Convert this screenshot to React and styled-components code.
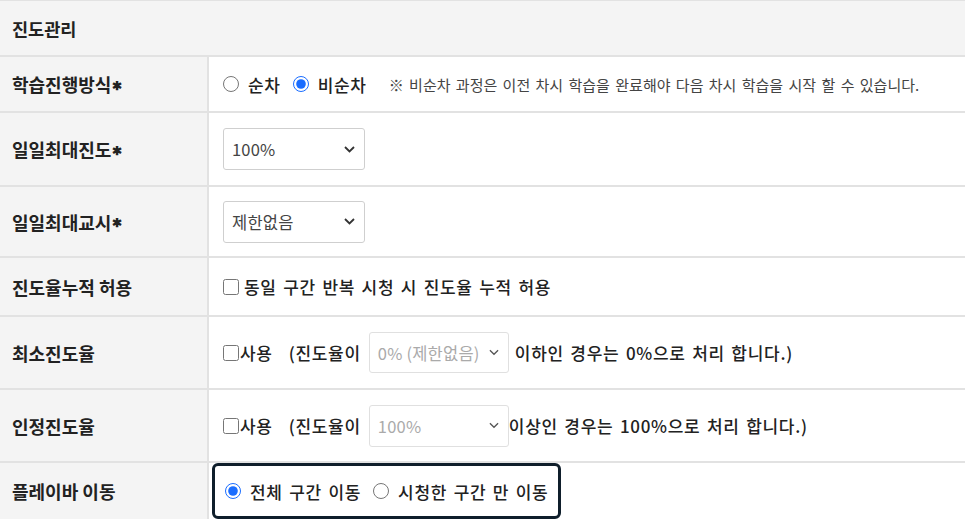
import React from 'react';
import styled, { createGlobalStyle } from 'styled-components';

const GlobalStyle = createGlobalStyle`
  body {
    margin: 0;
    background: #fff;
    font-family: "Noto Sans CJK KR", "Noto Sans", sans-serif;
    color: #222;
  }
`;

const Table = styled.div`
  width: 965px;
  border-top: 1px solid #e2e2e2;
`;

const Header = styled.div`
  height: 54px;
  display: flex;
  align-items: center;
  padding-left: 12px;
  background: #f4f4f4;
  border-bottom: 2px solid #e2e2e2;
  font-size: 17.5px;
  font-weight: 700;
`;

const Row = styled.div`
  display: grid;
  grid-template-columns: 209px 1fr;
  height: ${({ h }) => h}px;
  border-bottom: ${({ last }) => (last ? 'none' : '2px solid #e2e2e2')};
  box-sizing: border-box;
`;

const Label = styled.div`
  display: flex;
  align-items: center;
  padding-left: 12px;
  background: #f4f4f4;
  border-right: 2px solid #e2e2e2;
  font-size: 18px;
  font-weight: 700;
  color: #222;
`;

const Star = styled.span`
  font-size: 12px;
  margin-left: 1px;
`;

const Cell = styled.div`
  display: flex;
  align-items: center;
  padding-left: ${({ pl }) => pl ?? 14}px;
  font-size: 17px;
  font-weight: 500;
  color: #222;
  letter-spacing: 0.7px;
  word-spacing: 2px;
`;

const Radio = styled.input.attrs({ type: 'radio' })`
  width: 16px;
  height: 16px;
  margin: 0 9px 0 0;
  accent-color: #1a6dff;
`;

const Check = styled.input.attrs({ type: 'checkbox' })`
  width: 16px;
  height: 16px;
  margin: 0 ${({ gap }) => gap ?? 1}px 0 0;
`;

const Choice = styled.label`
  display: flex;
  align-items: center;
  margin-right: ${({ mr }) => mr ?? 12}px;
`;

const Note = styled.span`
  font-size: 15px;
  font-weight: 400;
  color: #444;
  margin-left: 22px;
  letter-spacing: 0;
  word-spacing: 2px;
`;

const Select = styled.div`
  display: flex;
  align-items: center;
  justify-content: space-between;
  box-sizing: border-box;
  width: ${({ w }) => w}px;
  height: ${({ h }) => h}px;
  padding: 0 9px 0 8px;
  border: 1px solid ${({ disabled }) => (disabled ? '#e0e0e0' : '#cfcfcf')};
  border-radius: 3px;
  background: #fff;
  font-size: 16.5px;
  font-weight: 400;
  letter-spacing: 0.2px;
  word-spacing: 0;
  color: ${({ disabled }) => (disabled ? '#aaa' : '#444')};
  margin: ${({ m }) => m ?? '0'};
`;

const Text = styled.span`
  margin-left: ${({ ml }) => ml ?? 0}px;
  white-space: pre;
`;

const Focus = styled.div`
  display: flex;
  align-items: center;
  height: 100%;
  box-sizing: border-box;
  padding: 0 10px 0 10px;
  border: 3px solid #0f1e2b;
  border-radius: 6px;
`;

const Chevron = ({ light }) => (
  <svg width={light ? 10 : 11} height="7" viewBox="0 0 11 7" fill="none">
    <path d="M1 1l4.5 4.5L10 1" stroke={light ? '#555' : '#333'} strokeWidth={light ? 1.4 : 1.8} />
  </svg>
);

const App = () => (
  <>
    <GlobalStyle />
    <Table>
      <Header>진도관리</Header>
      <Row h={56}>
        <Label>학습진행방식<Star>✱</Star></Label>
        <Cell>
          <Choice><Radio name="m" />순차</Choice>
          <Choice mr={0}><Radio name="m" defaultChecked />비순차</Choice>
          <Note>※ 비순차 과정은 이전 차시 학습을 완료해야 다음 차시 학습을 시작 할 수 있습니다.</Note>
        </Cell>
      </Row>
      <Row h={74}>
        <Label>일일최대진도<Star>✱</Star></Label>
        <Cell>
          <Select w={142} h={42}>100%<Chevron /></Select>
        </Cell>
      </Row>
      <Row h={71}>
        <Label>일일최대교시<Star>✱</Star></Label>
        <Cell>
          <Select w={142} h={42}>제한없음<Chevron /></Select>
        </Cell>
      </Row>
      <Row h={59}>
        <Label>진도율누적 허용</Label>
        <Cell>
          <Choice mr={0}><Check gap={5} />동일 구간 반복 시청 시 진도율 누적 허용</Choice>
        </Cell>
      </Row>
      <Row h={73}>
        <Label>최소진도율</Label>
        <Cell>
          <Choice mr={0}><Check />사용</Choice>
          <Text ml={16}>(진도율이</Text>
          <Select w={140} h={41} disabled m="0 6px 0 8px">0% (제한없음)<Chevron light /></Select>
          <Text>이하인 경우는 0%으로 처리 합니다.)</Text>
        </Cell>
      </Row>
      <Row h={73}>
        <Label>인정진도율</Label>
        <Cell>
          <Choice mr={0}><Check />사용</Choice>
          <Text ml={16}>(진도율이</Text>
          <Select w={140} h={42} disabled m="0 0 0 8px">100%<Chevron light /></Select>
          <Text>이상인 경우는 100%으로 처리 합니다.)</Text>
        </Cell>
      </Row>
      <Row h={56} last>
        <Label>플레이바 이동</Label>
        <Cell pl={3}>
          <Focus>
            <Choice><Radio name="p" defaultChecked />전체 구간 이동</Choice>
            <Choice mr={0}><Radio name="p" />시청한 구간 만 이동</Choice>
          </Focus>
        </Cell>
      </Row>
    </Table>
  </>
);

export default App;
